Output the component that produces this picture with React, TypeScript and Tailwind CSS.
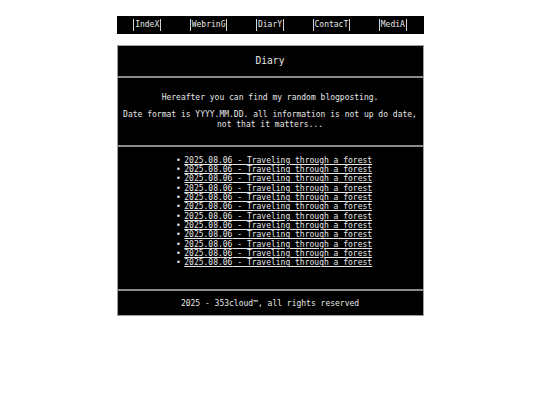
import React from 'react';

const navLinks = ['IndeX', 'WebrinG', 'DiarY', 'ContacT', 'MediA'];

const posts = Array.from({ length: 12 }, () => ({
  date: '2025.08.06',
  title: 'Traveling through a forest',
}));

export default function App() {
  return (
    <div
      className="min-h-screen bg-white pt-4 text-[8px] leading-[1.164] text-[#e8e8e8]"
      style={{ fontFamily: '"DejaVu Sans Mono", "Liberation Mono", monospace' }}
    >
      <div className="mx-auto w-[307px]">
        {/* navigation */}
        <nav className="grid h-[18px] grid-cols-5 items-center bg-black">
          {navLinks.map((l) => (
            <div key={l} className="flex justify-center">
              <a href="#" className="border-x border-[#d0d0d0] px-[1px] leading-[12px] text-[#e8e8e8]">
                {l}
              </a>
            </div>
          ))}
        </nav>

        {/* main box */}
        <div className="mt-[11px] border border-[#a0a0a0] bg-black">
          <div className="flex h-[30px] items-center justify-center text-[9.6px]">Diary</div>

          <div className="border-t-2 border-[#8a8a8a] px-1 pt-[15px] pb-[16px] text-center">
            <p>Hereafter you can find my random blogposting.</p>
            <p className="mt-2">
              Date format is YYYY.MM.DD. all information is not up do date,
              <br />
              not that it matters...
            </p>
          </div>

          <div className="border-t-2 border-[#8a8a8a] pt-[9px] pb-[22px] pl-[8px]">
            <ul className="text-center">
              {posts.map((p, i) => (
                <li key={i}>
                  <span className="inline-block w-[8.4px] text-left">•</span>
                  <a href="#" className="underline">
                    {p.date} - {p.title}
                  </a>
                </li>
              ))}
            </ul>
          </div>

          <div className="flex h-[26px] items-center justify-center border-t-2 border-[#8a8a8a]">
            2025 - 353cloud™, all rights reserved
          </div>
        </div>
      </div>
    </div>
  );
}
